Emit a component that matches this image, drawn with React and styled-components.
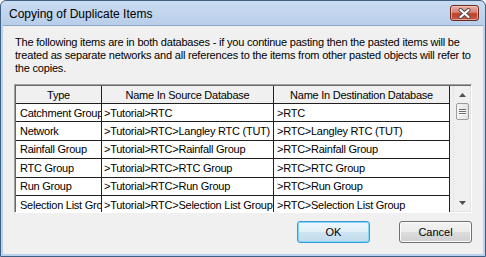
import React from "react";
import styled, { createGlobalStyle } from "styled-components";

const Global = createGlobalStyle`
  html, body { margin: 0; padding: 0; background: #ffffff; }
  body { font-family: "Liberation Sans", Arial, sans-serif; }
  * { box-sizing: border-box; }
`;

const Window = styled.div`
  width: 486px;
  height: 257px;
  display: flex;
  flex-direction: column;
  border: 1px solid #3f5f83;
  border-radius: 6px 6px 0 0;
  background: linear-gradient(#cadcf1 0px, #b8cee9 24px, #bfd4ed 40px, #bcd2ec 100%);
  padding: 0 2px 2px;
  overflow: hidden;
`;

const TitleBar = styled.div`
  height: 24px;
  flex: none;
  display: flex;
  justify-content: space-between;
  align-items: flex-start;
  padding: 0 4px 0 6px;
`;

const Title = styled.span`
  font-size: 12px;
  line-height: 27px;
  color: #000;
  white-space: nowrap;
`;

const CloseButton = styled.div`
  margin-top: 4px;
  width: 29px;
  height: 16px;
  border: 1px solid #6d2a20;
  border-radius: 3px;
  background: linear-gradient(#e8aca2 0%, #d88273 45%, #c0402d 55%, #c75a46 100%);
  box-shadow: inset 0 0 0 1px rgba(255, 220, 210, 0.55);
  display: flex;
  align-items: center;
  justify-content: center;
`;

const Client = styled.div`
  flex: 1;
  background: #f0f0f0;
  border: 1px solid #8ea6c4;
  border-width: 1px 0 0 0;
  padding: 10px 11px 11px;
  display: flex;
  flex-direction: column;
`;

const Message = styled.p`
  margin: 0 0 0 1px;
  font-size: 11px;
  line-height: 13px;
  letter-spacing: -0.2px;
  color: #000;
  white-space: nowrap;
`;

const ListBox = styled.div`
  margin-top: 9px;
  height: 129px;
  display: flex;
  border: 1px solid;
  border-color: #a0a0a0 #ffffff #ffffff #a0a0a0;
  box-shadow: inset 1px 1px 0 #696969, inset -1px -1px 0 #e3e3e3;
  padding: 1px;
  background: #f0f0f0;
  overflow: hidden;
`;

const Grid = styled.div`
  display: grid;
  grid-template-columns: 86px 172px 176px;
  grid-template-rows: 18px;
  grid-auto-rows: 18.4px;
  align-content: start;
  width: 434px;
  flex: none;
`;

const Cell = styled.div`
  border-right: 1px solid #202020;
  border-bottom: 1px solid #202020;
  background: ${(p) => (p.$head ? "#f0f0f0" : "#ffffff")};
  font-size: 11px;
  letter-spacing: -0.25px;
  color: #000;
  white-space: nowrap;
  overflow: hidden;
  display: flex;
  align-items: center;
  justify-content: ${(p) => (p.$head ? "center" : "flex-start")};
  padding-left: ${(p) => (p.$head ? 0 : p.$pad || 3)}px;
`;

const Spacer = styled.div`
  flex: 1;
`;

const ScrollBar = styled.div`
  width: 17px;
  flex: none;
  background: #f0f0f0;
  border-left: 1px solid #e6e6e6;
  display: flex;
  flex-direction: column;
  align-items: center;
`;

const Arrow = styled.div`
  height: 17px;
  width: 100%;
  display: flex;
  align-items: center;
  justify-content: center;
`;

const Thumb = styled.div`
  width: 13px;
  height: 17px;
  border: 1px solid #9c9c9c;
  border-radius: 2px;
  background: linear-gradient(90deg, #f4f4f4, #e2e2e2);
  display: flex;
  flex-direction: column;
  align-items: center;
  justify-content: center;
  gap: 1px;
`;

const Grip = styled.span`
  width: 7px;
  height: 1px;
  background: #6a6a6a;
  box-shadow: 0 1px 0 #ffffff;
`;

const Track = styled.div`
  flex: 1;
`;

const ButtonRow = styled.div`
  margin-top: 8px;
  display: flex;
  justify-content: flex-end;
  gap: 29px;
`;

const Button = styled.button`
  width: 73px;
  height: 22px;
  padding: 0;
  font-family: "Liberation Sans", Arial, sans-serif;
  font-size: 11px;
  color: #000;
  border-radius: 3px;
  border: 1px solid ${(p) => (p.$default ? "#3c9ad6" : "#707070")};
  background: ${(p) =>
    p.$default
      ? "linear-gradient(#edf6fb 0%, #e2eff7 48%, #cde4f2 52%, #c0dbec 100%)"
      : "linear-gradient(#f3f3f3 0%, #ebebeb 48%, #dddddd 52%, #cfcfcf 100%)"};
  box-shadow: ${(p) =>
    p.$default ? "inset 0 0 0 1px #7fd6f6" : "inset 0 0 0 1px #fcfcfc"};
`;

const rows = [
  ["Catchment Group", ">Tutorial>RTC", ">RTC"],
  ["Network", ">Tutorial>RTC>Langley RTC (TUT)", ">RTC>Langley RTC (TUT)"],
  ["Rainfall Group", ">Tutorial>RTC>Rainfall Group", ">RTC>Rainfall Group"],
  ["RTC Group", ">Tutorial>RTC>RTC Group", ">RTC>RTC Group"],
  ["Run Group", ">Tutorial>RTC>Run Group", ">RTC>Run Group"],
  ["Selection List Group", ">Tutorial>RTC>Selection List Group", ">RTC>Selection List Group"],
];

const pads = [4, 2, 3];

export default function App() {
  return (
    <>
      <Global />
      <Window>
        <TitleBar>
          <Title>Copying of Duplicate Items</Title>
          <CloseButton>
            <svg width="13" height="11" viewBox="0 0 13 11">
              <path d="M2.5 2 L10.5 9 M10.5 2 L2.5 9" stroke="#4a4a4a" strokeWidth="4" strokeLinecap="round" />
              <path d="M2.5 2 L10.5 9 M10.5 2 L2.5 9" stroke="#ffffff" strokeWidth="2.2" strokeLinecap="round" />
            </svg>
          </CloseButton>
        </TitleBar>
        <Client>
          <Message>
            The following items are in both databases - if you continue pasting then the pasted items will be
            <br />
            treated as separate networks and all references to the items from other pasted objects will refer to
            <br />
            the copies.
          </Message>
          <ListBox>
            <Grid>
              <Cell $head>Type</Cell>
              <Cell $head>Name In Source Database</Cell>
              <Cell $head>Name In Destination Database</Cell>
              {rows.map((r) =>
                r.map((t, i) => (
                  <Cell key={r[0] + i} $pad={pads[i]}>
                    {t}
                  </Cell>
                ))
              )}
            </Grid>
            <Spacer />
            <ScrollBar>
              <Arrow>
                <svg width="7" height="4" viewBox="0 0 7 4">
                  <path d="M0 4 L3.5 0 L7 4 Z" fill="#505050" />
                </svg>
              </Arrow>
              <Thumb>
                <Grip />
                <Grip />
                <Grip />
              </Thumb>
              <Track />
              <Arrow>
                <svg width="7" height="4" viewBox="0 0 7 4">
                  <path d="M0 0 L7 0 L3.5 4 Z" fill="#505050" />
                </svg>
              </Arrow>
            </ScrollBar>
          </ListBox>
          <ButtonRow>
            <Button $default>OK</Button>
            <Button>Cancel</Button>
          </ButtonRow>
        </Client>
      </Window>
    </>
  );
}
